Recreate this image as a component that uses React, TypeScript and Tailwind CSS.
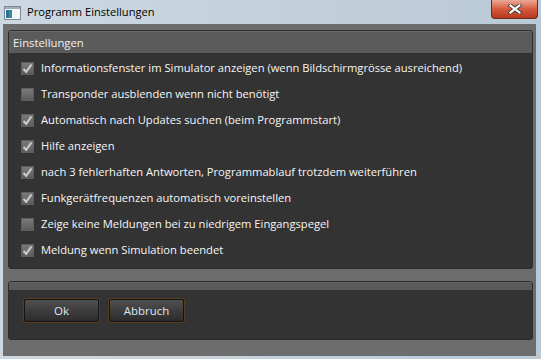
const options = [
  { label: 'Informationsfenster im Simulator anzeigen (wenn Bildschirmgrösse ausreichend)', checked: true },
  { label: 'Transponder ausblenden wenn nicht benötigt', checked: false },
  { label: 'Automatisch nach Updates suchen (beim Programmstart)', checked: true },
  { label: 'Hilfe anzeigen', checked: true },
  { label: 'nach 3 fehlerhaften Antworten, Programmablauf trotzdem weiterführen', checked: true },
  { label: 'Funkgerätfrequenzen automatisch voreinstellen', checked: true },
  { label: 'Zeige keine Meldungen bei zu niedrigem Eingangspegel', checked: false },
  { label: 'Meldung wenn Simulation beendet', checked: true },
];

function CheckBox({ checked }: { checked: boolean }) {
  return (
    <div className="w-[13px] h-[13px] shrink-0 border border-[#5e5e5e] bg-gradient-to-b from-[#7a7a7a] to-[#5c5c5c] flex items-center justify-center">
      {checked && (
        <svg width="11" height="11" viewBox="0 0 11 11">
          <path d="M1.5 6 L4.2 8.8 L9.5 1.5" fill="none" stroke="#cccccc" strokeWidth="2.1" />
        </svg>
      )}
    </div>
  );
}

function AppIcon() {
  return (
    <svg width="17" height="14" viewBox="0 0 17 14">
      <rect x="0.5" y="0.5" width="16" height="13" fill="#f4f6f8" stroke="#7b8a96" />
      <rect x="1" y="1" width="15" height="2" fill="#9fb0bd" />
      <rect x="2" y="4" width="6" height="8" fill="#3b8f8a" />
      <rect x="2" y="4" width="3" height="8" fill="#2e6f9e" />
    </svg>
  );
}

export default function App() {
  return (
    <div className="w-[541px] h-[359px] flex flex-col bg-gradient-to-r from-[#cdd8e1] via-[#c3d1dc] to-[#b9c9d5] font-['Open_Sans',sans-serif] overflow-hidden">
      {/* title bar */}
      <div className="h-[24px] shrink-0 flex items-center relative">
        <div className="ml-[4px] mt-[1px]">
          <AppIcon />
        </div>
        <span className="ml-[6px] text-[11.1px] text-black leading-none">Programm Einstellungen</span>
        <div className="absolute right-[3px] top-0 w-[47px] h-[19px] rounded-b-[4px] border border-t-0 border-[#6e2b1f] bg-gradient-to-b from-[#eaa898] via-[#d55a3e] to-[#b8361d] flex items-center justify-center">
          <svg width="14" height="10" viewBox="0 0 14 10">
            <path d="M2.5 1.5 L11.5 8.5 M11.5 1.5 L2.5 8.5" stroke="#3a3a3a" strokeWidth="4" strokeLinecap="square" />
            <path d="M2.5 1.5 L11.5 8.5 M11.5 1.5 L2.5 8.5" stroke="#ffffff" strokeWidth="2.2" strokeLinecap="square" />
          </svg>
        </div>
      </div>

      {/* client area */}
      <div className="flex-1 ml-[3px] mr-[5px] mb-[3px] bg-[#6d6d6d] pl-[5px] pr-[3px] pt-[6px] flex flex-col">
        {/* settings group */}
        <div className="h-[239px] rounded-[3px] border border-[#2c2c2c] bg-[#333333] flex flex-col overflow-hidden">
          <div className="h-[22px] shrink-0 bg-[#5b5b5b] border-t border-[#6a6a6a] flex items-center pl-[4px] pt-[2px]">
            <span className="text-[11.3px] text-[#f2f2f2]">Einstellungen</span>
          </div>
          <div className="flex flex-col pt-[2px] pl-[12px]">
            {options.map((o) => (
              <div key={o.label} className="h-[26px] flex items-center gap-[7px]">
                <CheckBox checked={o.checked} />
                <span className="text-[11.2px] text-[#f6f6f6] whitespace-nowrap">{o.label}</span>
              </div>
            ))}
          </div>
        </div>

        {/* button group */}
        <div className="mt-[12px] h-[59px] rounded-[3px] border border-[#2c2c2c] bg-[#333333] flex flex-col overflow-hidden">
          <div className="h-[8px] shrink-0 bg-[#5a5a5a] border-t border-[#666666]" />
          <div className="flex gap-[10px] pl-[15px] pt-[9px]">
            <button className="w-[75px] h-[23px] rounded-[2px] border border-[#151515] bg-gradient-to-b from-[#505050] to-[#2c2c2c] shadow-[0_0_0_1px_#5e3d1e] text-[11.5px] text-[#dbe6f0]">
              Ok
            </button>
            <button className="w-[75px] h-[23px] rounded-[2px] border border-[#151515] bg-gradient-to-b from-[#505050] to-[#2c2c2c] shadow-[0_0_0_1px_#5e3d1e] text-[11.5px] text-[#dbe6f0]">
              Abbruch
            </button>
          </div>
        </div>
      </div>
    </div>
  );
}
